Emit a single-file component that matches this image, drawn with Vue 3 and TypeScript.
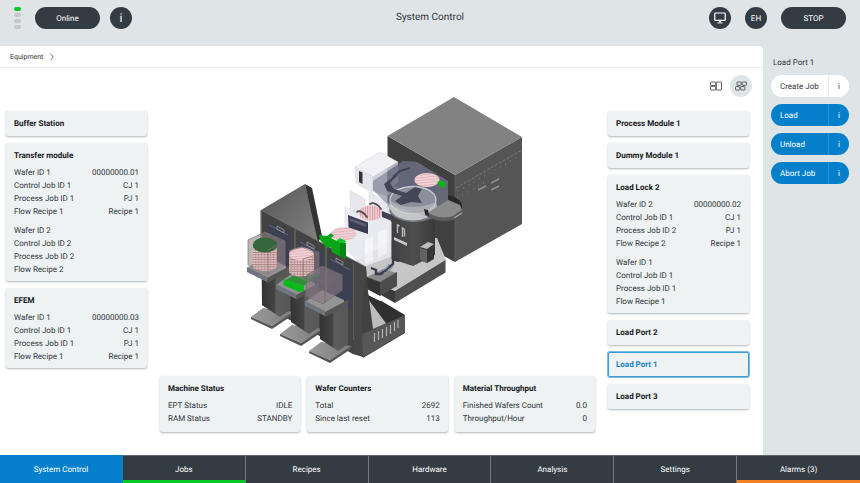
<script setup lang="ts">
import { ref } from 'vue'

interface Row { label: string; value?: string }
interface Module { name: string; groups?: Row[][] }

const makeGroup = (ids: number[], values: string[] = []): Row[] =>
  ['Wafer ID', 'Control Job ID', 'Process Job ID', 'Flow Recipe'].map((label, i) => ({
    label: `${label} ${ids[i]}`,
    value: values[i],
  }))

const leftModules: Module[] = [
  { name: 'Buffer Station' },
  {
    name: 'Transfer module',
    groups: [
      makeGroup([1, 1, 1, 1], ['00000000.01', 'CJ 1', 'PJ 1', 'Recipe 1']),
      makeGroup([2, 2, 2, 2]),
    ],
  },
  { name: 'EFEM', groups: [makeGroup([1, 1, 1, 1], ['00000000.03', 'CJ 1', 'PJ 1', 'Recipe 1'])] },
]

const rightModules: Module[] = [
  { name: 'Process Module 1' },
  { name: 'Dummy Module 1' },
  {
    name: 'Load Lock 2',
    groups: [
      makeGroup([2, 1, 2, 2], ['00000000.02', 'CJ 1', 'PJ 1', 'Recipe 1']),
      makeGroup([1, 1, 1, 1]),
    ],
  },
  { name: 'Load Port 2' },
  { name: 'Load Port 1' },
  { name: 'Load Port 3' },
]

const stats: Module[] = [
  { name: 'Machine Status', groups: [[{ label: 'EPT Status', value: 'IDLE' }, { label: 'RAM Status', value: 'STANDBY' }]] },
  { name: 'Wafer Counters', groups: [[{ label: 'Total', value: '2692' }, { label: 'Since last reset', value: '113' }]] },
  { name: 'Material Throughput', groups: [[{ label: 'Finished Wafers Count', value: '0.0' }, { label: 'Throughput/Hour', value: '0' }]] },
]

const selected = ref('Load Port 1')
const view = ref('modules')
const activeTab = ref('System Control')

const actions = [
  { label: 'Create Job', primary: false },
  { label: 'Load', primary: true },
  { label: 'Unload', primary: true },
  { label: 'Abort Job', primary: true },
]

const tabs = [
  { label: 'System Control', mark: '' },
  { label: 'Jobs', mark: 'ok' },
  { label: 'Recipes', mark: '' },
  { label: 'Hardware', mark: '' },
  { label: 'Analysis', mark: '' },
  { label: 'Settings', mark: '' },
  { label: 'Alarms (3)', mark: 'warn' },
]
</script>

<template>
  <div class="app">
    <header class="topbar">
      <div class="side">
        <div class="signal"><i class="on"></i><i></i><i></i><i></i></div>
        <button class="pill" type="button">Online</button>
        <button class="round info" type="button">i</button>
      </div>
      <h1>System Control</h1>
      <div class="side end">
        <button class="round" type="button" aria-label="Display">
          <svg width="12" height="12" viewBox="0 0 12 12" fill="none" stroke="#fff">
            <rect x=".8" y="1" width="10.400" height="7.400" rx=".6" stroke-width="1.200" />
            <path stroke-width="1.800" d="M6 8.500v2" />
            <path d="M3.400 10.900h5.200" />
          </svg>
        </button>
        <button class="round" type="button">EH</button>
        <button class="pill" type="button">STOP</button>
      </div>
    </header>

    <div class="body">
      <main>
        <nav class="crumbs">
          <a href="#equipment">Equipment</a>
          <svg width="4" height="8" viewBox="0 0 4 8" fill="none" stroke="#555b60" stroke-width=".8"><path d="M.6.6 3.2 4 .6 7.4" /></svg>
        </nav>
        <div class="board">
          <section class="column left">
            <button v-for="m in leftModules" :key="m.name" type="button" class="card" :class="{ selected: selected === m.name }" @click="selected = m.name">
              <strong>{{ m.name }}</strong>
              <span v-for="(g, i) in m.groups" :key="i" class="group">
                <span v-for="r in g" :key="r.label" class="row"><span>{{ r.label }}</span><span>{{ r.value }}</span></span>
              </span>
            </button>
          </section>

          <section class="center">
            <svg class="machine" viewBox="160 90 435 280" role="img" aria-label="Equipment model">
              <defs>
                <pattern id="waferV" width="2.4" height="4" patternUnits="userSpaceOnUse"><rect width="2.4" height="4" fill="#efd3d6" /><rect width="1" height="4" fill="#d7989f" /></pattern>
                <pattern id="waferH" width="4" height="2.6" patternUnits="userSpaceOnUse" patternTransform="rotate(-5)"><rect width="4" height="2.6" fill="#f2d3d7" /><rect width="4" height="1" fill="#e3b4ba" /></pattern>
                <pattern id="stack" width="3" height="2.4" patternUnits="userSpaceOnUse"><rect width="3" height="2.4" fill="#dfc3c2" /><path d="M0 .5H3" stroke="#80686a" stroke-width=".7" /><path d="M.5 0V2.4" stroke="#cf868c" stroke-width=".5" /></pattern>
                <linearGradient id="wall" x1="0" y1="0" x2="1" y2="1"><stop offset="0" stop-color="#555" /><stop offset="1" stop-color="#858585" /></linearGradient>
                <linearGradient id="leg" x1="0" y1="0" x2="1" y2="0"><stop offset="0" stop-color="#333" /><stop offset=".45" stop-color="#444" /><stop offset=".5" stop-color="#5d5d5d" /><stop offset="1" stop-color="#565656" /></linearGradient>
                <linearGradient id="drum" x1="0" y1="0" x2="1" y2="0"><stop offset="0" stop-color="#3f3f3f" /><stop offset=".5" stop-color="#4e4e4e" /><stop offset="1" stop-color="#3a3a3a" /></linearGradient>
                <linearGradient id="foot" x1="0" y1="0" x2="1" y2="0"><stop offset="0" stop-color="#9a9a9a" /><stop offset="1" stop-color="#7c7c7c" /></linearGradient>
              </defs>

              <!-- process cabinet -->
              <path fill="#404040" d="M387.500 136 455 175v87l-15-8-6-12-46.500-22z" />
              <path fill="#555" d="m455 175 67-38v87l-67 38z" />
              <path fill="#828282" d="m454 97 68 40-67 38-67.500-39z" />
              <path fill="none" stroke="#8d8d8d" stroke-width=".7" stroke-dasharray="3 1.500" d="m456 188 66-38" />
              <path fill="none" stroke="#9a9a9a" stroke-width=".8" stroke-dasharray="1 5" d="m458 191 60-34M457 198l30-17" />
              <path stroke="#909090" stroke-width="1.600" d="m478 190 8-4M491 183l8-4M491 190l8-4" />
              <path stroke="#6b6b6b" stroke-width=".6" d="M455 175v87" />

              <!-- platform -->
              <path fill="#c6c6c6" d="m354 262 38-22 45-2 9 22-51 31-41-19z" />
              <path fill="#3c3c3c" d="m367 280 28 11v12l-28-16z" />
              <path fill="#4f4f4f" d="m395 291 50.500-31v12.500L395 303z" />

              <!-- translucent load lock -->
              <g fill="#dfe0e8" stroke="#c8c9d3" stroke-width=".4">
                <path fill="#f1f1f5" d="m355 167 25-15 18 10-25 15z" />
                <path fill="#e5e6eb" d="m355 167 18 10v16l-17-10z" />
                <path fill="#c9cad6" opacity=".85" d="m373 177 25-15v27l-11 7-14-5z" />
                <path opacity=".75" d="m350 190 15 9v62l-15-8z" />
                <path opacity=".7" d="m369 192 22 12v48l-22-9z" />
                <path fill="#eaebf0" opacity=".8" d="m345 207 20 11 26-12v51l-27 10-19-18z" />
              </g>
              <path fill="#fff" opacity=".5" d="m365 240 8-4v25l-8 3zM378 233l9-4v24l-9 5z" />
              <path fill="#333" d="m359 171 3.500 1.500V184l-3.500-2z" />
              <ellipse cx="370.500" cy="213" rx="11.500" ry="7.500" fill="url(#waferV)" />
              <path fill="none" stroke="#4b4b50" stroke-width="1.700" stroke-linecap="round" d="M357 212c2-2 7 0 10 5M370 204c3-2 8 0 11 5" />
              <path fill="#3b3e50" d="m348 215 20 7.500V234l-19.500-6.500z" />
              <path fill="#5b5f73" d="m350 218 16 6v3l-16-6z" />
              <path fill="#3f4254" d="m382 211 10 4v6l-10-4z" />

              <!-- transfer chamber -->
              <path fill="url(#drum)" d="M391.500 208v51l21.500 7 22-11v-47z" />
              <path fill="#353535" d="m420 248 14-6v17l-7 4-7-3z" />
              <path fill="#626262" d="m420 248 7 2v13l-7-3z" />
              <path fill="#bcbcbc" d="m420 247 8-5 6 2-7 5z" />
              <path fill="none" stroke="#b9b9b9" stroke-width="1.400" d="M397.500 233v-8l2 1M402.500 237v-9l2 1.500v7" />
              <path fill="#c8c8c8" d="m394 237 13 6v3l-13-6z" />
              <path fill="#77798c" opacity=".6" d="m373 181 30-20 14 1 31 19v22l-20 14-41-13-14-14z" />
              <path fill="#5a5d70" opacity=".5" d="m387 172 16-11 14 1 31 19v9l-26 6-35-8z" />
              <ellipse cx="414" cy="209" rx="25" ry="13" fill="#74767d" />
              <ellipse cx="413" cy="207" rx="24" ry="14" fill="#c4c5c8" />
              <path fill="none" stroke="#74767d" stroke-width="1.400" d="M390 210c5 14 39 16 47-1" />
              <ellipse cx="413" cy="200" rx="23" ry="13.500" fill="#8e9098" stroke="#d6d7da" stroke-width="1.400" />
              <path fill="#b4b5ba" d="M391 201c4 16 38 17 44 1-9 6-35 7-44-1" />
              <path fill="#8587a1" opacity=".2" d="m387 178 16-17 14 1 31 19v22l-20 14-41-13z" />
              <path fill="#424656" d="m394 189 12 4 9-6 7 2-4 7 4 7-11-1-10 3-6-4 7-5-15-5-3-7 10-8 4-1-8 8z" />
              <path fill="none" stroke="#424553" stroke-width="2" d="m393 177 7-6 10-3" />
              <path fill="#62667a" d="m409 171 8 2 3 8-11 5-16 1 10-9z" />
              <ellipse cx="427" cy="180" rx="12.500" ry="7" fill="url(#waferH)" />
              <path fill="#0bb31b" d="m437 183 3-3 6 3-1 5-4-1z" />
              <path fill="#2a2a2a" d="M448 195c7 1 13 5 14 10v5l-4-5-10-6z" />
              <path fill="#8a8a8a" d="m429 212 19-12 12 5 2 5-10 8c-5 3-15 2-18 0l-9-3z" />
              <path fill="#5b5b5b" d="M425 211c8 6 19 8 28 5l10-7v4l-10 7c-10 3-21 0-28-5z" />
              <path fill="#272727" d="m424 209 4 1 1 6-4-2z" />
              <path stroke="#a5a5a5" stroke-width="1.300" d="m454 218 8-5" />

              <!-- buffer handler -->
              <path fill="#8a8a8a" d="m367 277 17-8 13 4-17 10z" />
              <path fill="#353535" d="m367 277 13 5v14l-13-7z" />
              <path fill="#4c4c4c" d="m380 282 17-10v14l-17 10z" />
              <path fill="none" stroke="#3b3e47" stroke-width="2.400" d="m371 268 5 2v4h5l12-10v-5l6 2" />
              <path fill="none" stroke="#838ba4" stroke-width="1.200" d="M380 271c4-1 8-3 9-7M384 273c5-1 7-4 9-7" />

              <!-- front-end cabinet -->
              <path fill="url(#wall)" d="m261 210 44-26 14 55-3 10-55-35z" />
              <path fill="#333" d="m305 184 7 4 10 48-4 6z" />
              <path fill="#434343" d="m261 210 105 57-3 90-10-3-91-49z" />
              <path fill="none" stroke="#757575" stroke-width=".7" d="m261 210 105 57" />
              <path fill="#3d4051" d="m268 222 23 12v41l-23-12zM299 239l24 13v43l-24-13zM329 256l24 13v41l-24-13z" />
              <path fill="none" stroke="#636678" stroke-width="1" d="m269 225 19 10M300 242l20 11M330 259l20 11" />
              <path fill="none" stroke="#ababab" stroke-width=".7" d="m277 226 7 4v3l-7-4zM307 242l7 4v3l-7-4zM336 258l7 4v3l-7-4z" />
              <path stroke="#6d6d6d" stroke-width="1.200" d="M295 229v73M326 245v70M354 263v77M261 210v68" />
              <path fill="#474747" d="m354 263 12 4 1 30 8 31-12 29-9-4z" />
              <path fill="#303030" d="m368 293 37 22-17 11-20-6z" />
              <path fill="#fff" d="m368 291 16 8-4 2-12-6z" />
              <path fill="#bcbcbc" d="m368 299 20 27-14 6-6-8z" />
              <path fill="#414141" d="m366 267 2 24 5 38 32-14v18l-42 25-1-46z" />
              <path fill="#575757" d="m374 329 31-14v17l-42 25-1-23z" />
              <path fill="none" stroke="#b0b0b0" stroke-width="1.200" d="M374.500 333v9M378.500 331v9M382.500 329v9M386.500 327v9M390.500 325v9M394.500 322v9M398 320v8" />

              <!-- wafer robot -->
              <ellipse cx="343.500" cy="234" rx="12.500" ry="6.500" fill="url(#waferH)" stroke="#dfb7bc" stroke-width=".4" />
              <path fill="#07a616" d="m319 235 8 1 4-3 3 3-3 2 6 3h8v18l-13-7-1-5-4 1-7-8z" />
              <path fill="#15c426" d="m336 241 4-3 6 3-2 3z" />
              <path fill="#078514" d="M340 243h6v16l-6-3z" />

              <!-- load ports -->
              <g v-for="n in 3" :key="n" :transform="`translate(${(n - 1) * 29} ${(n - 1) * 17})`">
                <path fill="url(#foot)" d="m251 317 12-9 31 4-22 14z" />
                <path fill="#555" d="m251 317 21 9 21-14v3l-21 14-21-10z" />
                <path fill="url(#leg)" d="m262 278 28-12v44l-10 7-18-12z" />
                <path fill="#949494" d="m247 268 17-12 22 10v3l-19 10z" />
                <path fill="#70747f" d="m247 267 20 10v5l-20-10z" />
                <path fill="#555" d="m267 278 19-10v5l-19 10z" />
              </g>
              <g>
                <path fill="#8f8284" opacity=".6" d="m248 240 17-8 20 9v25l-18 10-19-10z" />
                <path fill="url(#stack)" d="M253 246h24v21c-5 6-20 5-24 0z" />
                <ellipse cx="265" cy="245" rx="12.300" ry="7.500" fill="#35673a" />
                <path fill="none" stroke="#7c7173" stroke-width=".7" d="m248 240 17-8 20 9v25M248 240v25M268 250l17-9M268 250v25" />
              </g>
              <g>
                <path fill="#118b1c" opacity=".75" d="m286 280 16-10 18 5-16 11z" />
                <path fill="#0bb91b" d="m284 279 20 7v5l-5 1-16-7z" />
                <path fill="#8f8284" opacity=".5" d="m289 250 13-4 17 7v20l-14 8-16-8z" />
                <path fill="url(#stack)" d="M289 255h25v17c-5 6-21 6-25 0z" />
                <ellipse cx="301.500" cy="254" rx="12.300" ry="6.500" fill="url(#waferH)" />
                <path fill="none" stroke="#7c6a6c" stroke-width=".7" d="m289 251 13-4 17 7v20M303 259l16-5M303 259v20" />
              </g>
              <g>
                <path fill="#857a83" opacity=".65" d="m307 275 15-9 20 9v15l-19 14-17-8z" />
                <path fill="none" stroke="#766c74" stroke-width=".8" d="m307 275 15-9 20 9-17 8zM307 275l-1 21 17 8 19-14v-15M325 283v20" />
              </g>
            </svg>

            <div class="stats">
              <article v-for="s in stats" :key="s.name" class="card">
                <strong>{{ s.name }}</strong>
                <span v-for="(g, i) in s.groups" :key="i" class="group">
                  <span v-for="r in g" :key="r.label" class="row"><span>{{ r.label }}</span><span>{{ r.value }}</span></span>
                </span>
              </article>
            </div>
          </section>

          <section class="right">
            <div class="views">
              <button type="button" aria-label="Overview" :class="{ current: view === 'overview' }" @click="view = 'overview'">
                <svg width="12" height="10" viewBox="0 0 12 10" fill="none" stroke="#4a5157" stroke-width=".9">
                  <rect x=".5" y="1" width="5.200" height="3.600" rx=".6" />
                  <rect x=".5" y="5.400" width="5.200" height="3.600" rx=".6" />
                  <rect x="6.300" y="1" width="5.200" height="8" rx=".6" />
                </svg>
              </button>
              <button type="button" aria-label="Modules" :class="{ current: view === 'modules' }" @click="view = 'modules'">
                <svg width="12" height="10" viewBox="0 0 12 10" fill="none" stroke="#4a5157" stroke-width=".9">
                  <rect x="2" y="1" width="4.200" height="3.400" rx=".6" />
                  <rect x="7.200" y="1" width="4.300" height="3.400" rx=".6" />
                  <rect x=".5" y="5.600" width="4.200" height="3.400" rx=".6" />
                  <rect x="5.700" y="5.600" width="4.200" height="3.400" rx=".6" />
                </svg>
              </button>
            </div>
            <div class="column">
              <button v-for="m in rightModules" :key="m.name" type="button" class="card" :class="{ selected: selected === m.name }" @click="selected = m.name">
                <strong>{{ m.name }}</strong>
                <span v-for="(g, i) in m.groups" :key="i" class="group">
                  <span v-for="r in g" :key="r.label" class="row"><span>{{ r.label }}</span><span>{{ r.value }}</span></span>
                </span>
              </button>
            </div>
          </section>
        </div>
      </main>

      <aside>
        <h2>{{ selected }}</h2>
        <div v-for="a in actions" :key="a.label" class="action" :class="{ primary: a.primary }">
          <button type="button">{{ a.label }}</button>
          <button type="button" class="hint" :aria-label="`About ${a.label}`">i</button>
        </div>
      </aside>
    </div>

    <nav class="tabs">
      <button v-for="t in tabs" :key="t.label" type="button" :class="[t.mark, { active: activeTab === t.label }]" @click="activeTab = t.label">{{ t.label }}</button>
    </nav>
  </div>
</template>

<style>
body {
  margin: 0;
}
</style>

<style scoped>
.app {
  display: grid;
  grid-template-rows: auto 1fr auto;
  min-height: 100vh;
  background: #dfe4e7;
  color: #2f353a;
  font: 8px/13px Roboto, "Liberation Sans", sans-serif;
  text-rendering: geometricPrecision;
}
.app * {
  box-sizing: border-box;
}
button {
  margin: 0;
  padding: 0;
  border: 0;
  background: none;
  color: inherit;
  font: inherit;
  text-rendering: inherit;
  cursor: pointer;
}
h1,
h2 {
  margin: 0;
  font-weight: 400;
}
.topbar {
  display: grid;
  grid-template-columns: 1fr auto 1fr;
  align-items: center;
  padding: 7px 14px 17px;
}
.topbar h1 {
  font-size: 10px;
  line-height: 22px;
}
.side {
  display: flex;
  align-items: center;
  gap: 10px;
}
.end {
  justify-content: flex-end;
  gap: 14px;
}
.signal {
  display: grid;
  gap: 2px;
  margin-right: 4px;
}
.signal i {
  width: 7px;
  height: 4px;
  border-radius: 2px;
  background: #c3c7c9;
}
.signal .on {
  background: #06c925;
}
.pill,
.round {
  height: 22px;
  border-radius: 11px;
  background: #343c43;
  color: #fff;
}
.pill {
  width: 65px;
}
.round {
  display: grid;
  place-items: center;
  width: 22px;
}
.info {
  font-size: 12px;
}
.body {
  display: grid;
  grid-template-columns: 1fr 97px;
}
main {
  border-top-right-radius: 4px;
  background: #fff;
}
.crumbs {
  display: flex;
  align-items: center;
  gap: 7px;
  height: 22px;
  padding: 1px 0 0 10px;
  border-bottom: 1px solid #eceef0;
  font-size: 7px;
}
.crumbs a {
  color: inherit;
  text-decoration: none;
}
.board {
  display: grid;
  grid-template-columns: 141px 1fr 141px;
  padding: 0 14px 23px 6px;
}
.column {
  display: grid;
  gap: 7px;
  align-content: start;
}
.left {
  padding-top: 43px;
}
.card {
  display: block;
  min-width: 0;
  padding: 6px 8px 5px;
  border-radius: 2px;
  background: #eef2f3;
  box-shadow: 0 1px 2px rgba(40, 50, 60, 0.36);
  text-align: left;
}
.card strong {
  display: block;
  margin-bottom: 3px;
  color: #16191c;
  font-weight: 700;
  line-height: 14px;
}
.card strong:last-child {
  margin-bottom: 0;
}
.card.selected {
  box-shadow: inset 0 0 0 1px #3a9bd5, 0 0 0 1px #7dbce2;
}
.card.selected strong {
  color: #1583c6;
}
.group {
  display: block;
}
.group + .group {
  margin-top: 6px;
}
.row {
  display: flex;
  justify-content: space-between;
}
.center {
  display: flex;
  flex-direction: column;
  align-items: center;
  padding: 22px 13px 0;
}
.machine {
  display: block;
  width: 100%;
  max-width: 640px;
}
.stats {
  display: grid;
  grid-template-columns: repeat(3, 1fr);
  gap: 7px;
  width: 100%;
  margin-top: 6px;
}
.stats .card {
  min-height: 56px;
}
.views {
  display: flex;
  justify-content: flex-end;
  gap: 3px;
  margin-right: -3px;
  padding: 7px 0 14px;
}
.views button {
  display: grid;
  place-items: center;
  width: 22px;
  height: 22px;
  border-radius: 50%;
}
.views .current {
  background: #dfe4e7;
}
aside {
  display: flex;
  flex-direction: column;
  gap: 7px;
  padding: 10px 11px 0 8px;
}
aside h2 {
  margin-bottom: -1px;
  padding-left: 2px;
  font-size: 8px;
  line-height: 13px;
}
.action {
  display: flex;
  height: 22px;
  overflow: hidden;
  border-radius: 11px;
  background: #fff;
}
.action button {
  flex: 1;
  padding-left: 9px;
  text-align: left;
}
.action .hint {
  flex: 0 0 21px;
  padding: 0;
  border-left: 1px solid #e3e7e9;
  text-align: center;
}
.primary {
  background: #0480cb;
  color: #fff;
}
.primary .hint {
  border-color: #2391d2;
}
.tabs {
  display: grid;
  grid-template-columns: repeat(7, 1fr);
}
.tabs button {
  height: 28px;
  border-top: 1px solid #5d656b;
  border-right: 1px solid #737b80;
  background: #343c43;
  color: #fff;
}
.tabs button:last-child {
  border-right: 0;
}
.tabs .active {
  border-color: #0480cb;
  background: #0480cb;
}
.tabs .ok {
  box-shadow: inset 0 -3px #06c925;
}
.tabs .warn {
  box-shadow: inset 0 -3px #f58220;
}
</style>
